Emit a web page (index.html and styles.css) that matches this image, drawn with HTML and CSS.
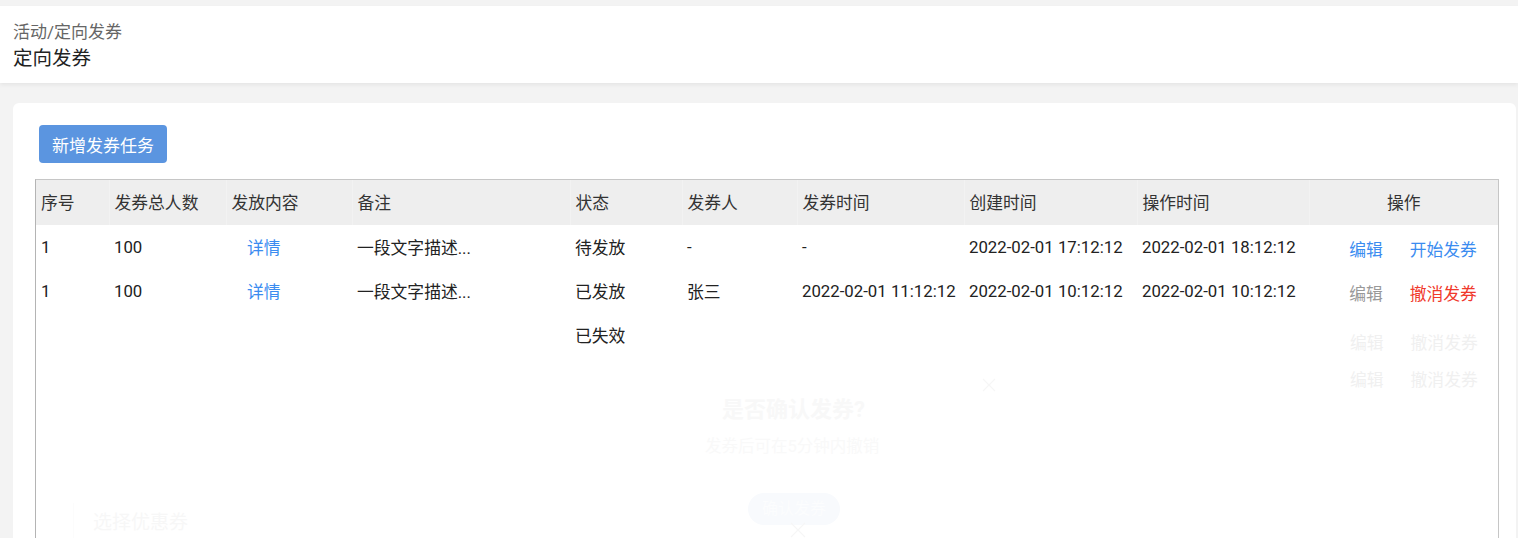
FILE: index.html
```html
<!DOCTYPE html>
<html lang="zh-CN">
<head>
  <meta charset="UTF-8">
  <meta name="viewport" content="width=device-width, initial-scale=1.0">
  <title>定向发券</title>
  <link rel="stylesheet" href="styles.css">
</head>
<body>

  <div class="page-header">
    <div class="breadcrumb">活动/定向发券</div>
    <div class="page-title">定向发券</div>
  </div>

  <div class="card">
    <button class="btn-primary">新增发券任务</button>

    <div class="table-wrap">
      <table class="task-table">
        <colgroup>
          <col style="width:73px">
          <col style="width:117px">
          <col style="width:126px">
          <col style="width:218px">
          <col style="width:112px">
          <col style="width:115px">
          <col style="width:167px">
          <col style="width:173px">
          <col style="width:172px">
          <col>
        </colgroup>
        <thead>
          <tr>
            <th>序号</th>
            <th>发券总人数</th>
            <th>发放内容</th>
            <th>备注</th>
            <th>状态</th>
            <th>发券人</th>
            <th>发券时间</th>
            <th>创建时间</th>
            <th>操作时间</th>
            <th class="col-ops">操作</th>
          </tr>
        </thead>
        <tbody>
          <tr>
            <td>1</td>
            <td>100</td>
            <td class="col-detail"><a class="link">详情</a></td>
            <td>一段文字描述...</td>
            <td>待发放</td>
            <td>-</td>
            <td>-</td>
            <td>2022-02-01 17:12:12</td>
            <td>2022-02-01 18:12:12</td>
            <td class="col-ops">
              <div class="ops">
                <a class="link">编辑</a>
                <a class="link">开始发券</a>
              </div>
            </td>
          </tr>
          <tr>
            <td>1</td>
            <td>100</td>
            <td class="col-detail"><a class="link">详情</a></td>
            <td>一段文字描述...</td>
            <td>已发放</td>
            <td>张三</td>
            <td>2022-02-01 11:12:12</td>
            <td>2022-02-01 10:12:12</td>
            <td>2022-02-01 10:12:12</td>
            <td class="col-ops">
              <div class="ops">
                <a class="link-muted">编辑</a>
                <a class="link-danger">撤消发券</a>
              </div>
            </td>
          </tr>
          <tr>
            <td></td>
            <td></td>
            <td></td>
            <td></td>
            <td>已失效</td>
            <td></td>
            <td></td>
            <td></td>
            <td></td>
            <td></td>
          </tr>
        </tbody>
      </table>
    </div>
  </div>

  <!-- fading confirm dialog left over from the transition -->
  <div class="ghost">
    <div class="ghost-ops ghost-ops-1"><span>编辑</span><span>撤消发券</span></div>
    <div class="ghost-ops ghost-ops-2"><span>编辑</span><span>撤消发券</span></div>
    <div class="ghost-title">是否确认发券?</div>
    <div class="ghost-desc">发券后可在5分钟内撤销</div>
    <div class="ghost-btn">确认发券</div>
    <svg class="ghost-close" width="14" height="14" viewBox="0 0 14 14">
      <path d="M1 1 L13 13 M13 1 L1 13" stroke="#f6f6f6" stroke-width="1.2" fill="none"/>
    </svg>
    <svg class="ghost-close-2" width="16" height="16" viewBox="0 0 16 16">
      <path d="M1 1 L15 15 M15 1 L1 15" stroke="#f6f6f6" stroke-width="1.2" fill="none"/>
    </svg>
    <div class="ghost-panel">选择优惠券</div>
  </div>

</body>
</html>
```

FILE: styles.css
```css
body {
  font-family: Roboto, "Noto Sans CJK SC", sans-serif;
  background-color: #f3f3f3;
  margin: 0;
  padding: 0;
  color: #222;
  height: 538px;
  overflow: hidden;
  position: relative;
}

.page-header {
  margin-top: 6px;
  height: 77px;
  background-color: #fff;
  box-shadow: 0 2px 4px rgba(0, 0, 0, 0.06);
  padding: 14px 13px 0;
  box-sizing: border-box;
}

.breadcrumb {
  font-size: 17px;
  color: #666;
  line-height: 24px;
}

.page-title {
  font-size: 19.5px;
  color: #222;
  line-height: 30px;
}

.card {
  margin: 20px 2px 0 13px;
  background-color: #fff;
  border-radius: 6px;
  padding: 22px 17px 0 22px;
  height: 460px;
  box-sizing: border-box;
}

.btn-primary {
  margin-left: 4px;
  width: 128px;
  height: 38px;
  border: none;
  border-radius: 4px;
  background-color: #5b95e0;
  color: #fff;
  font-family: inherit;
  font-size: 17px;
  padding: 0;
  cursor: pointer;
}

.table-wrap {
  margin-top: 16px;
  height: 400px;
  border: 1px solid #c6c6c6;
  border-left-color: #b4b4b4;
}

.task-table {
  width: 100%;
  border-collapse: collapse;
  table-layout: fixed;
  font-size: 16.8px;
}

.task-table th {
  background-color: #eeeeee;
  font-weight: normal;
  color: #333;
  text-align: left;
  height: 43px;
  padding: 0 0 2px 5px;
  border-right: 1px solid #f2f2f2;
}

.task-table th:last-child {
  border-right: none;
}

.task-table td {
  height: 44px;
  padding: 0 0 0 5px;
  white-space: nowrap;
  color: #222;
}

.task-table th.col-ops {
  text-align: center;
  padding-left: 0;
}

.col-detail {
  padding-left: 21px !important;
}

.ops {
  display: flex;
  justify-content: center;
  gap: 27px;
  padding-left: 14px;
  padding-top: 3px;
}

.link {
  color: #3b8cf0;
  cursor: pointer;
}

.link-muted {
  color: #999;
}

.link-danger {
  color: #f0392c;
}

/* fading overlay */
.ghost {
  position: absolute;
  top: 0;
  left: 0;
  width: 100%;
  height: 100%;
  pointer-events: none;
}

.ghost-ops {
  position: absolute;
  left: 1350px;
  display: flex;
  gap: 27px;
  font-size: 16.8px;
  color: #f0f0f0;
}

.ghost-ops-1 {
  top: 330px;
}

.ghost-ops-2 {
  top: 367px;
}

.ghost-title {
  position: absolute;
  left: 722px;
  top: 391px;
  font-size: 22px;
  font-weight: bold;
  color: #f8f8f8;
}

.ghost-desc {
  position: absolute;
  left: 705px;
  top: 433px;
  font-size: 16.5px;
  color: #f9f9f9;
}

.ghost-btn {
  position: absolute;
  left: 748px;
  top: 493px;
  width: 92px;
  height: 32px;
  border-radius: 16px;
  background-color: #f8fafd;
  color: #fcfdfe;
  font-size: 16px;
  line-height: 32px;
  text-align: center;
}

.ghost-close {
  position: absolute;
  left: 982px;
  top: 378px;
}

.ghost-close-2 {
  position: absolute;
  left: 790px;
  top: 522px;
}

.ghost-panel {
  position: absolute;
  left: 73px;
  top: 503px;
  width: 240px;
  height: 35px;
  border-left: 1px solid #fcfcfc;
  padding: 8px 0 0 19px;
  font-size: 19px;
  line-height: 24px;
  color: #f7f7f7;
  box-sizing: border-box;
}
```
